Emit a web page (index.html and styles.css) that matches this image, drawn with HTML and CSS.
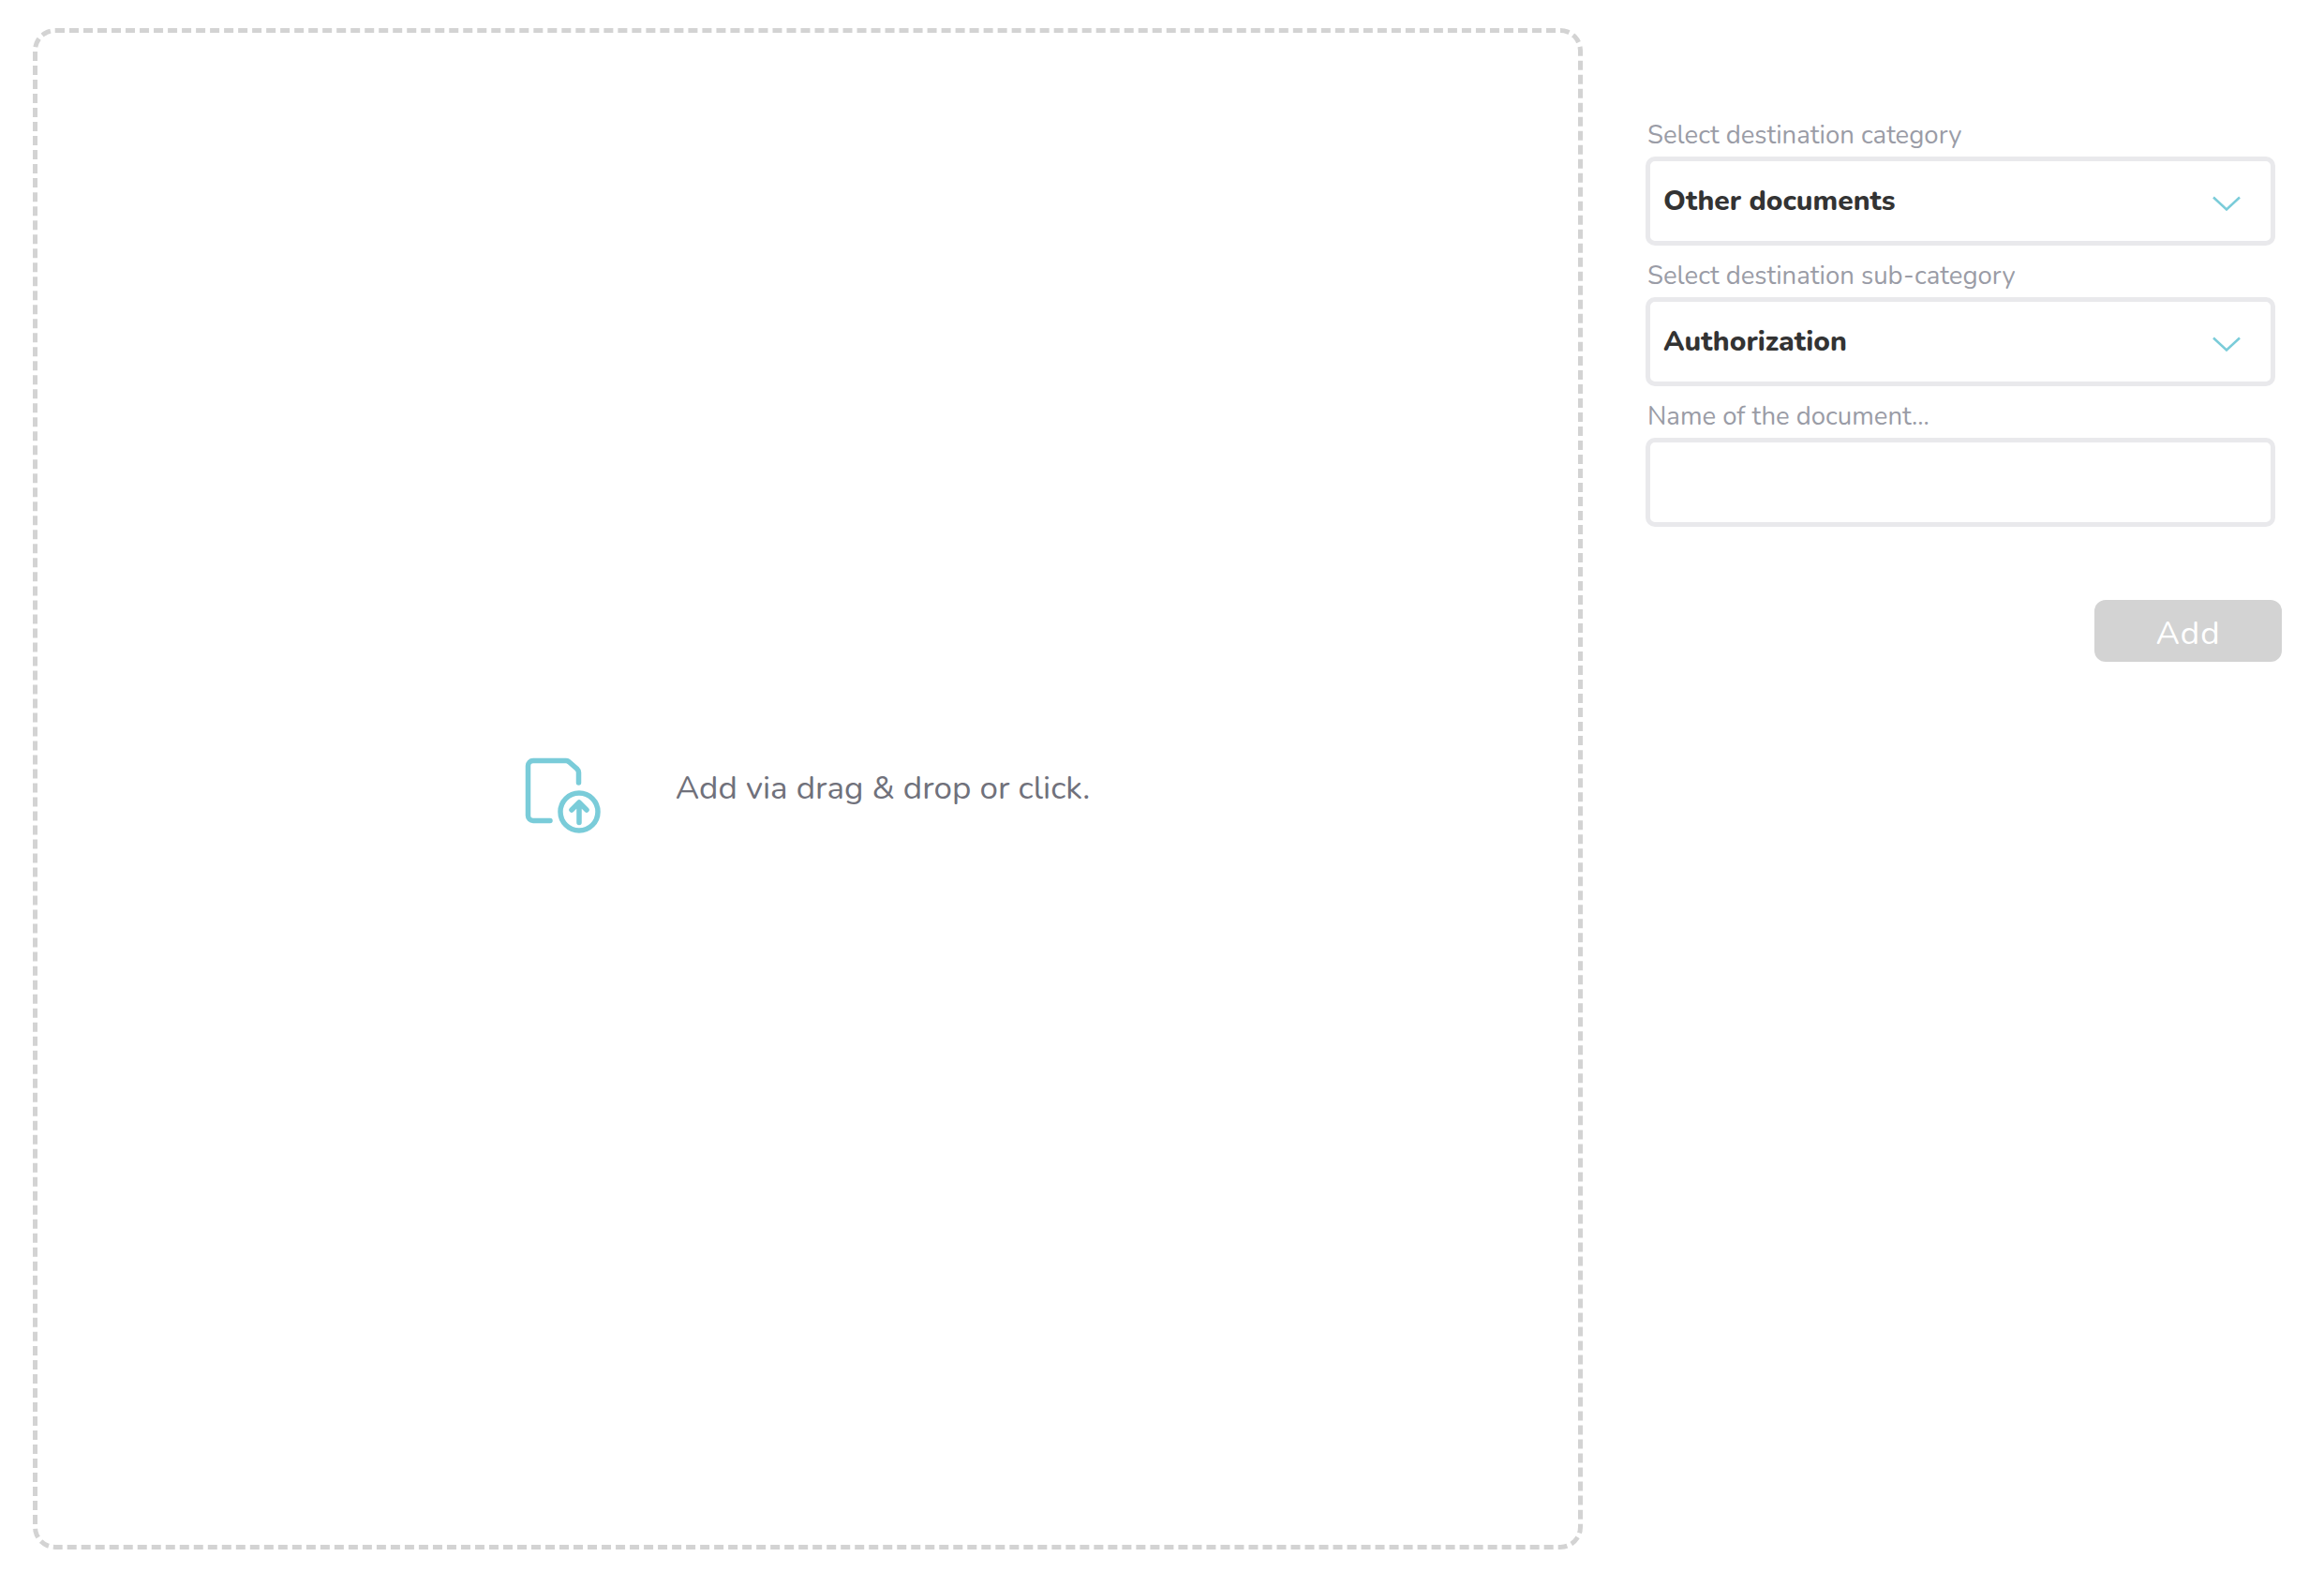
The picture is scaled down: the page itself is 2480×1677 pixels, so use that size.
FILE: index.html
```html
<!DOCTYPE html>
<html lang="en">
<head>
  <meta charset="UTF-8">
  <title>Add document</title>
  <link rel="stylesheet" href="styles.css">
</head>
<body>
  <div class="page">
    <div class="dropzone">
      <svg class="upload-icon" viewBox="0 0 90 90" fill="none" stroke="#7accd9" stroke-width="5.500" stroke-linecap="round" stroke-linejoin="round">
        <path d="M33 76.5H15a5.5 5.5 0 0 1-5.5-5.5V18a5.5 5.5 0 0 1 5.5-5.5H50q2 0 3.500 1.500L61.500 21q2 2 2 4V36"/>
        <circle cx="64" cy="67" r="20"/>
        <path d="M64 78.500V57.500M56 65L64 57L72 65"/>
      </svg>
      <span class="drop-text">Add via drag &amp; drop or click.</span>
    </div>

    <div class="side">
      <label class="field-label">Select destination category</label>
      <div class="field">
        <span class="field-value">Other documents</span>
        <svg class="chevron" viewBox="0 0 30 16" fill="none" stroke="#7accd9" stroke-width="2.500"><path d="M1 1.500L15 14.500L29 1.500"/></svg>
      </div>

      <label class="field-label">Select destination sub-category</label>
      <div class="field">
        <span class="field-value">Authorization</span>
        <svg class="chevron" viewBox="0 0 30 16" fill="none" stroke="#7accd9" stroke-width="2.500"><path d="M1 1.500L15 14.500L29 1.500"/></svg>
      </div>

      <label class="field-label">Name of the document...</label>
      <div class="field"></div>

      <div class="actions">
        <button class="add-btn" disabled>Add</button>
      </div>
    </div>
  </div>
</body>
</html>
```

FILE: styles.css
```css
html, body {
  margin: 0;
  padding: 0;
  background: #fff;
}

body {
  font-family: "Nunito", "Lato", "Noto Sans", sans-serif;
}

.page {
  display: flex;
  align-items: flex-start;
  padding: 30px 45px 24px 35px;
}

.dropzone {
  box-sizing: border-box;
  width: 1654px;
  height: 1623px;
  padding-right: 7px;
  border: 5px dashed #d3d3d3;
  border-radius: 24px;
  display: flex;
  align-items: center;
  justify-content: center;
  gap: 77px;
}

.upload-icon {
  width: 90px;
  height: 90px;
  flex: none;
  margin-top: 5px;
}

.drop-text {
  font-size: 35px;
  color: #70717b;
  margin-bottom: 2px;
}

.side {
  width: 679px;
  margin-left: 67px;
  padding-top: 97px;
}

.field-label {
  display: block;
  height: 40px;
  line-height: 35px;
  padding-left: 2px;
  font-size: 27.5px;
  color: #9a9ca6;
}

.field {
  box-sizing: border-box;
  width: 672px;
  height: 95px;
  margin-bottom: 15px;
  padding: 0 32px 0 14px;
  border: 5px solid #e9e9ec;
  border-radius: 10px;
  display: flex;
  align-items: center;
  justify-content: space-between;
}

.field-value {
  font-size: 30px;
  font-weight: 800;
  color: #333;
  margin-bottom: 1px;
}

.chevron {
  width: 30px;
  height: 16px;
  flex: none;
  margin-top: 4px;
}

.actions {
  display: flex;
  justify-content: flex-end;
  margin-top: 78px;
}

.add-btn {
  width: 200px;
  height: 66px;
  padding: 4px 0 0;
  border: none;
  border-radius: 12px;
  background: #d3d3d3;
  color: #fff;
  font-family: inherit;
  font-size: 35px;
  letter-spacing: 1px;
}
```
